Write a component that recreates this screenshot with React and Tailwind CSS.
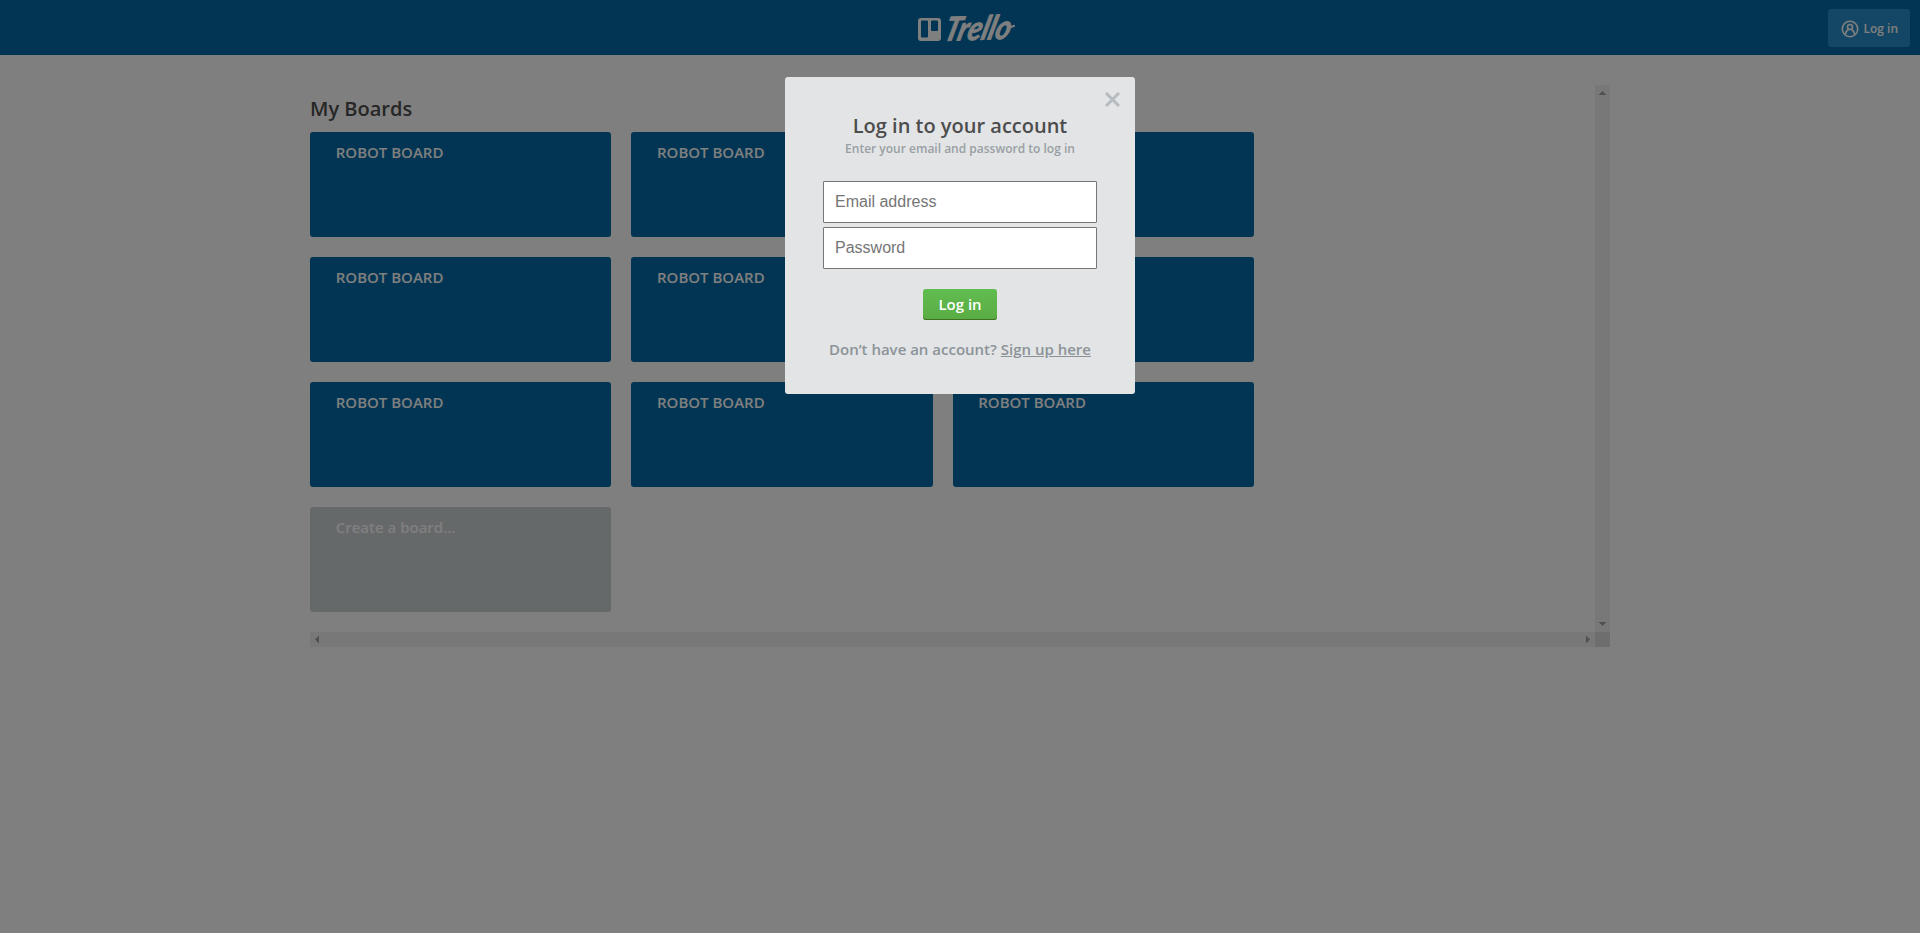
import React from "react";

const boards = Array.from({ length: 9 }, (_, i) => i);

function Logo() {
  return (
    <svg width="110" height="40" viewBox="0 0 110 40" className="block overflow-visible" aria-label="Trello">
      <path
        fill="#fff"
        fillRule="evenodd"
        d="M3 10h17a3 3 0 0 1 3 3v17a3 3 0 0 1-3 3H3a3 3 0 0 1-3-3V13a3 3 0 0 1 3-3zM4 12.500a1 1 0 0 0-1 1v15a1 1 0 0 0 1 1h5a1 1 0 0 0 1-1v-15a1 1 0 0 0-1-1zM14 12.500a1 1 0 0 0-1 1v8.500a1 1 0 0 0 1 1h5a1 1 0 0 0 1-1v-8.500a1 1 0 0 0-1-1z"
      />
      <text
        transform="translate(24.500 33) rotate(-2) skewX(-17)"
        fill="#fff"
        stroke="#fff"
        strokeWidth="0.8"
        strokeLinejoin="round"
        fontFamily="Lato, sans-serif"
        fontStyle="italic"
        fontWeight="700"
        fontSize="33"
        textLength="66"
        lengthAdjust="spacingAndGlyphs"
      >
        Trello
      </text>
      <path d="M90 18.500q3 1 6-.7" fill="none" stroke="#fff" strokeWidth="2" strokeLinecap="round" />
    </svg>
  );
}

function Header() {
  return (
    <header className="grid h-[55px] grid-cols-[918px_1fr_auto] items-center bg-[#026aa7] pr-[10px]">
      <span />
      <div className="flex pt-[1px]">
        <Logo />
      </div>
      <button className="mt-[1px] flex h-[38px] w-[82px] items-center rounded-[3px] bg-[#298fca] pl-[13px] text-[12px] font-semibold text-white">
        <svg width="18" height="18" viewBox="0 0 18 18" fill="none" stroke="#fff" strokeWidth="1.6" className="mt-[2px]">
          <circle cx="9" cy="9" r="7.7" />
          <circle cx="9" cy="7" r="2.5" />
          <path d="M4.500 14.500c0-2.900 1.300-4.200 3.100-5M13.500 14.500c0-2.900-1.300-4.200-3.100-5" />
        </svg>
        <span className="ml-[4.500px] pt-px">Log in</span>
      </button>
    </header>
  );
}

function Arrow({ points }) {
  return (
    <svg width="15" height="15" viewBox="0 0 15 15" className="block" shapeRendering="crispEdges">
      <polygon points={points} fill="#a3a3a3" />
    </svg>
  );
}

function Boards() {
  return (
    <main className="mx-auto mt-[30px] grid h-[562px] w-[1300px] grid-cols-[1285px_15px] grid-rows-[547px_15px]">
      <section className="overflow-hidden">
        <h1 className="mt-[11px] text-[20px] leading-[26px] font-semibold text-[#4d4d4d]">My Boards</h1>
        <div className="mt-[10px] grid w-[963.75px] grid-cols-3 gap-y-5">
          {boards.map((b) => (
            <div key={b} className="mr-5 h-[105px] rounded-[3px] bg-[#026aa7] px-[25.75px] pt-[9px] text-[15px] leading-[22px] font-semibold text-white">
              ROBOT BOARD
            </div>
          ))}
          <div className="mr-5 h-[105px] rounded-[3px] bg-[#cdd2d4] px-[25.75px] pt-[9px] text-[15px] leading-[22px] font-semibold text-white">
            Create a board...
          </div>
        </div>
      </section>
      <div className="flex flex-col justify-between bg-[#f1f1f1]">
        <Arrow points="4,10 11,10 7.5,6" />
        <Arrow points="4,5 11,5 7.5,9" />
      </div>
      <div className="flex justify-between bg-[#f1f1f1]">
        <Arrow points="9,4 9,11 5,7.5" />
        <Arrow points="6,4 6,11 10,7.5" />
      </div>
      <div className="bg-[#dcdcdc]" />
    </main>
  );
}

function LoginDialog() {
  return (
    <div className="flex h-[317px] w-[350px] flex-col items-center rounded-[3px] bg-[#e2e4e6] pt-[15px]">
      <button className="mr-[15px] h-[15px] w-[15px] self-end" aria-label="Close">
        <svg width="15" height="15" viewBox="0 0 15 15" stroke="#b6bbbf" strokeWidth="3" className="block">
          <path d="M1 1l13 13M14 1L1 14" />
        </svg>
      </button>
      <h2 className="mt-[6px] text-[20px] leading-[26px] font-semibold text-[#4d4d4d]">Log in to your account</h2>
      <p className="mt-[1px] text-[12px] leading-[18px] font-semibold text-[#999fa3]">Enter your email and password to log in</p>
      <form className="mt-[23px] flex flex-col items-center" onSubmit={(e) => e.preventDefault()}>
        <input
          type="email"
          placeholder="Email address"
          className="h-[42px] w-[274px] rounded-[1px] border border-[#767676] bg-white px-[11px] font-['Liberation_Sans',sans-serif] text-[16px] placeholder:text-[#757575]"
        />
        <input
          type="password"
          placeholder="Password"
          className="mt-1 h-[42px] w-[274px] rounded-[1px] border border-[#767676] bg-white px-[11px] font-['Liberation_Sans',sans-serif] text-[16px] placeholder:text-[#757575]"
        />
        <button className="mt-5 h-[31px] w-[74px] rounded-[3px] bg-linear-to-b from-[#61bd4f] to-[#5aac44] pb-[1px] text-[15px] leading-[30px] font-semibold text-white shadow-[inset_0_-1px_0_#3f6f21]">
          Log in
        </button>
      </form>
      <p className="mt-[18px] text-[15px] leading-[22px] font-semibold text-[#8c9398]">
        Don’t have an account? <a className="underline" href="#signup">Sign up here</a>
      </p>
    </div>
  );
}

export default function App() {
  return (
    <div className="min-h-screen bg-white font-['Open_Sans',sans-serif]">
      <Header />
      <Boards />
      <div className="fixed inset-0 flex items-start justify-center bg-black/50 pt-[77px]">
        <LoginDialog />
      </div>
    </div>
  );
}
